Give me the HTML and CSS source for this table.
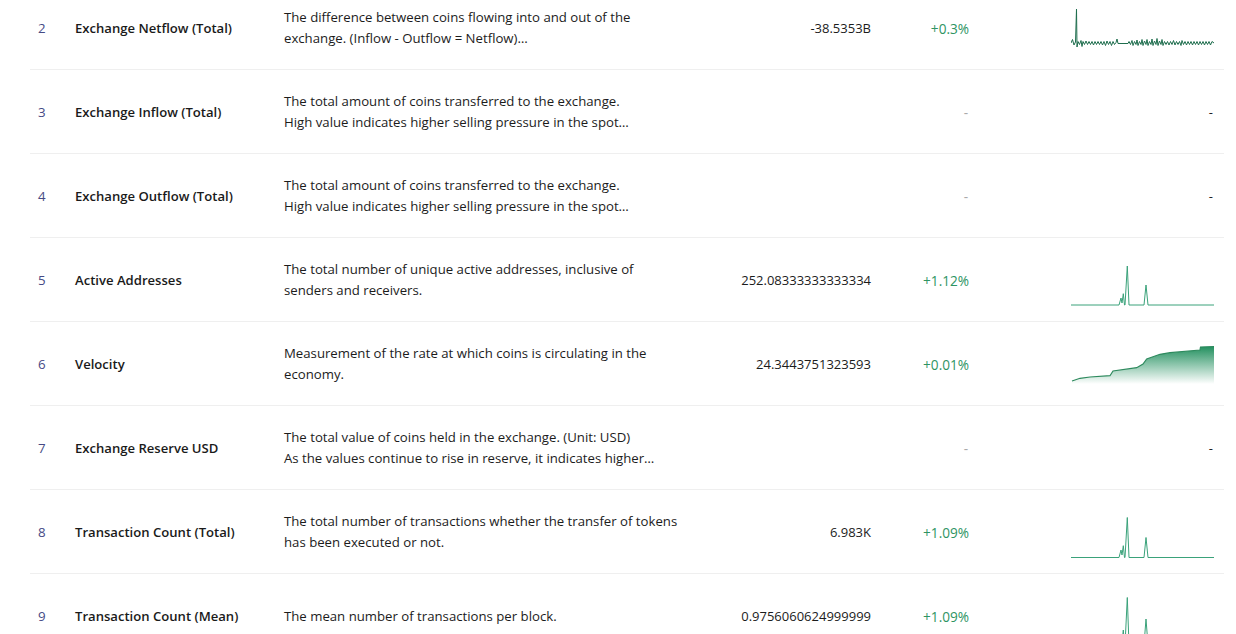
FILE: index.html
```html
<!DOCTYPE html>
<html>
<head>
<meta charset="utf-8">
<link rel="stylesheet" href="styles.css">
</head>
<body>
<div class="table">
  <div class="row">
    <div class="num">2</div>
    <div class="name">Exchange Netflow (Total)</div>
    <div class="desc"><span>The difference between coins flowing into and out of the</span><span>exchange. (Inflow - Outflow = Netflow)…</span></div>
    <div class="value">-38.5353B</div>
    <div class="change">+0.3%</div>
    <div class="chart">
      <svg width="145" height="52" viewBox="0 0 145 52"><polyline fill="none" stroke="#1f6e4e" stroke-width="1" points="0,41 1.5,37.5 3,43 4.5,40 5.5,7 6,45 7,39.5 8.5,42.5 10,38.5 11,44.5 12,39.5 13.5,42.5 15,39 16.5,42.5 18,39.5 19.5,42.5 21,39.5 22.5,43 24,39.5 25.5,42.5 27,39.5 28.5,42.5 30,39.5 31.5,43 33,39.5 34.5,43.5 36,39 37.5,42.5 39,39.5 40.5,43.5 42,39.5 43.5,42.5 45,40.5 46,37 47,41.5 57,41.5 58,39.5 59.5,42.5 61,38.5 62,43.5 63.5,39.5 65,42.5 66,38 67,43.5 68.5,39.5 70,42.5 71,37.5 72,43.5 73.5,39 75,42.5 76,37.5 77,43.5 78.5,39.5 80,42.5 81,37 82,43.5 83.5,39 85,42.5 86,36.5 87,43.5 88.5,39 90,42.5 91,37.5 92,43.5 93.5,39.5 95,42.5 96.5,39.5 98,43 99.5,39.5 101,42.5 102.5,38.5 104,43 105.5,39.5 107,42.5 108.5,39.5 110,43.5 111,38.5 112.5,42.5 114,39.5 115.5,43 117,39.5 118.5,42.5 120,39.5 121.5,43 123,39.5 124.5,42.5 126,39.5 127.5,43 129,39.5 130.5,42.5 132,39.5 133.5,43 135,39.5 136.5,42.5 138,39.5 139.5,43 141,39.5 143,41"/></svg>
    </div>
  </div>
  <div class="row">
    <div class="num">3</div>
    <div class="name">Exchange Inflow (Total)</div>
    <div class="desc"><span>The total amount of coins transferred to the exchange.</span><span>High value indicates higher selling pressure in the spot…</span></div>
    <div class="value"></div>
    <div class="change empty">-</div>
    <div class="chart dash">-</div>
  </div>
  <div class="row">
    <div class="num">4</div>
    <div class="name">Exchange Outflow (Total)</div>
    <div class="desc"><span>The total amount of coins transferred to the exchange.</span><span>High value indicates higher selling pressure in the spot…</span></div>
    <div class="value"></div>
    <div class="change empty">-</div>
    <div class="chart dash">-</div>
  </div>
  <div class="row">
    <div class="num">5</div>
    <div class="name">Active Addresses</div>
    <div class="desc"><span>The total number of unique active addresses, inclusive of</span><span>senders and receivers.</span></div>
    <div class="value">252.08333333333334</div>
    <div class="change">+1.12%</div>
    <div class="chart">
      <svg width="145" height="52" viewBox="0 0 145 52"><polyline fill="none" stroke="#3aa27a" stroke-width="1" points="0,51 48,51 50,44 51,49 52.3,39.7 53.5,51 54,51 56.3,12 58,51 73,51 75,31 77,51 143,51"/></svg>
    </div>
  </div>
  <div class="row">
    <div class="num">6</div>
    <div class="name">Velocity</div>
    <div class="desc"><span>Measurement of the rate at which coins is circulating in the</span><span>economy.</span></div>
    <div class="value">24.3443751323593</div>
    <div class="change">+0.01%</div>
    <div class="chart">
      <svg width="145" height="52" viewBox="0 0 145 52">
        <defs><linearGradient id="vg" x1="0" y1="0" x2="0" y2="1"><stop offset="0" stop-color="#23905f" stop-opacity="1"/><stop offset="1" stop-color="#23905f" stop-opacity="0"/></linearGradient></defs>
        <polygon fill="url(#vg)" points="1,43 9,40.3 19,39 39,37.7 42,33 65.7,29.7 72,26 75.7,21 89,16.3 99,14.7 129,12 129.5,9 143,8.5 143,46 1,46"/>
        <polyline fill="none" stroke="#2e8a5e" stroke-width="1.2" points="1,43 9,40.3 19,39 39,37.7 42,33 65.7,29.7 72,26 75.7,21 89,16.3 99,14.7 129,12 129.5,9 143,8.5"/>
      </svg>
    </div>
  </div>
  <div class="row">
    <div class="num">7</div>
    <div class="name">Exchange Reserve USD</div>
    <div class="desc"><span>The total value of coins held in the exchange. (Unit: USD)</span><span>As the values continue to rise in reserve, it indicates higher…</span></div>
    <div class="value"></div>
    <div class="change empty">-</div>
    <div class="chart dash">-</div>
  </div>
  <div class="row">
    <div class="num">8</div>
    <div class="name">Transaction Count (Total)</div>
    <div class="desc"><span>The total number of transactions whether the transfer of tokens</span><span>has been executed or not.</span></div>
    <div class="value">6.983K</div>
    <div class="change">+1.09%</div>
    <div class="chart">
      <svg width="145" height="52" viewBox="0 0 145 52"><polyline fill="none" stroke="#3aa27a" stroke-width="1" points="0,51.5 48,51.5 50,44 51,49 52.3,39.7 53.5,51.5 54,51.5 56.3,11.5 58,51.5 73,51.5 75,31.5 77,51.5 143,51.5"/></svg>
    </div>
  </div>
  <div class="row">
    <div class="num">9</div>
    <div class="name">Transaction Count (Mean)</div>
    <div class="desc"><span>The mean number of transactions per block.</span></div>
    <div class="value">0.9756060624999999</div>
    <div class="change">+1.09%</div>
    <div class="chart">
      <svg width="145" height="52" viewBox="0 0 145 52"><polyline fill="none" stroke="#3aa27a" stroke-width="1" points="0,55 48,55 50,46 51,52 52.3,40 53.5,55 54,55 56.3,7.5 58,55 73,55 75,29 77,55 143,55"/></svg>
    </div>
  </div>
</div>
</body>
</html>
```
FILE: styles.css
```css
html, body {
  margin: 0;
  padding: 0;
  background: #ffffff;
}
body {
  font-family: "Open Sans", "Noto Sans", "Liberation Sans", sans-serif;
  font-size: 13px;
  color: #1c1c1c;
  overflow: hidden;
}
.table {
  margin: -14px 12px 0 30px;
}
.row {
  display: grid;
  grid-template-columns: 45px 209px 400px 187px 98px 245px;
  height: 84px;
  box-sizing: border-box;
  align-items: center;
  border-bottom: 1px solid #efefef;
  padding-right: 10px;
  padding-top: 1px;
}
.num {
  padding-left: 8px;
  color: #464a85;
  font-size: 13.3px;
}
.name {
  font-weight: 600;
  color: #1a1a1a;
  font-size: 13.1px;
}
.desc {
  display: flex;
  flex-direction: column;
  line-height: 21px;
  font-size: 13.2px;
  color: #1c1c1c;
  white-space: nowrap;
}
.value {
  text-align: right;
  color: #1c1c1c;
}
.change {
  text-align: right;
  color: #2e9463;
  font-size: 13.6px;
  font-weight: 500;
}
.change.empty {
  color: #aaa;
  padding-right: 1px;
  font-weight: 400;
}
.chart {
  display: flex;
  justify-content: flex-end;
  align-items: center;
}
.chart svg {
  display: block;
  margin-right: -2px;
}
.chart.dash {
  color: #222;
  padding-right: 1px;
}
```
